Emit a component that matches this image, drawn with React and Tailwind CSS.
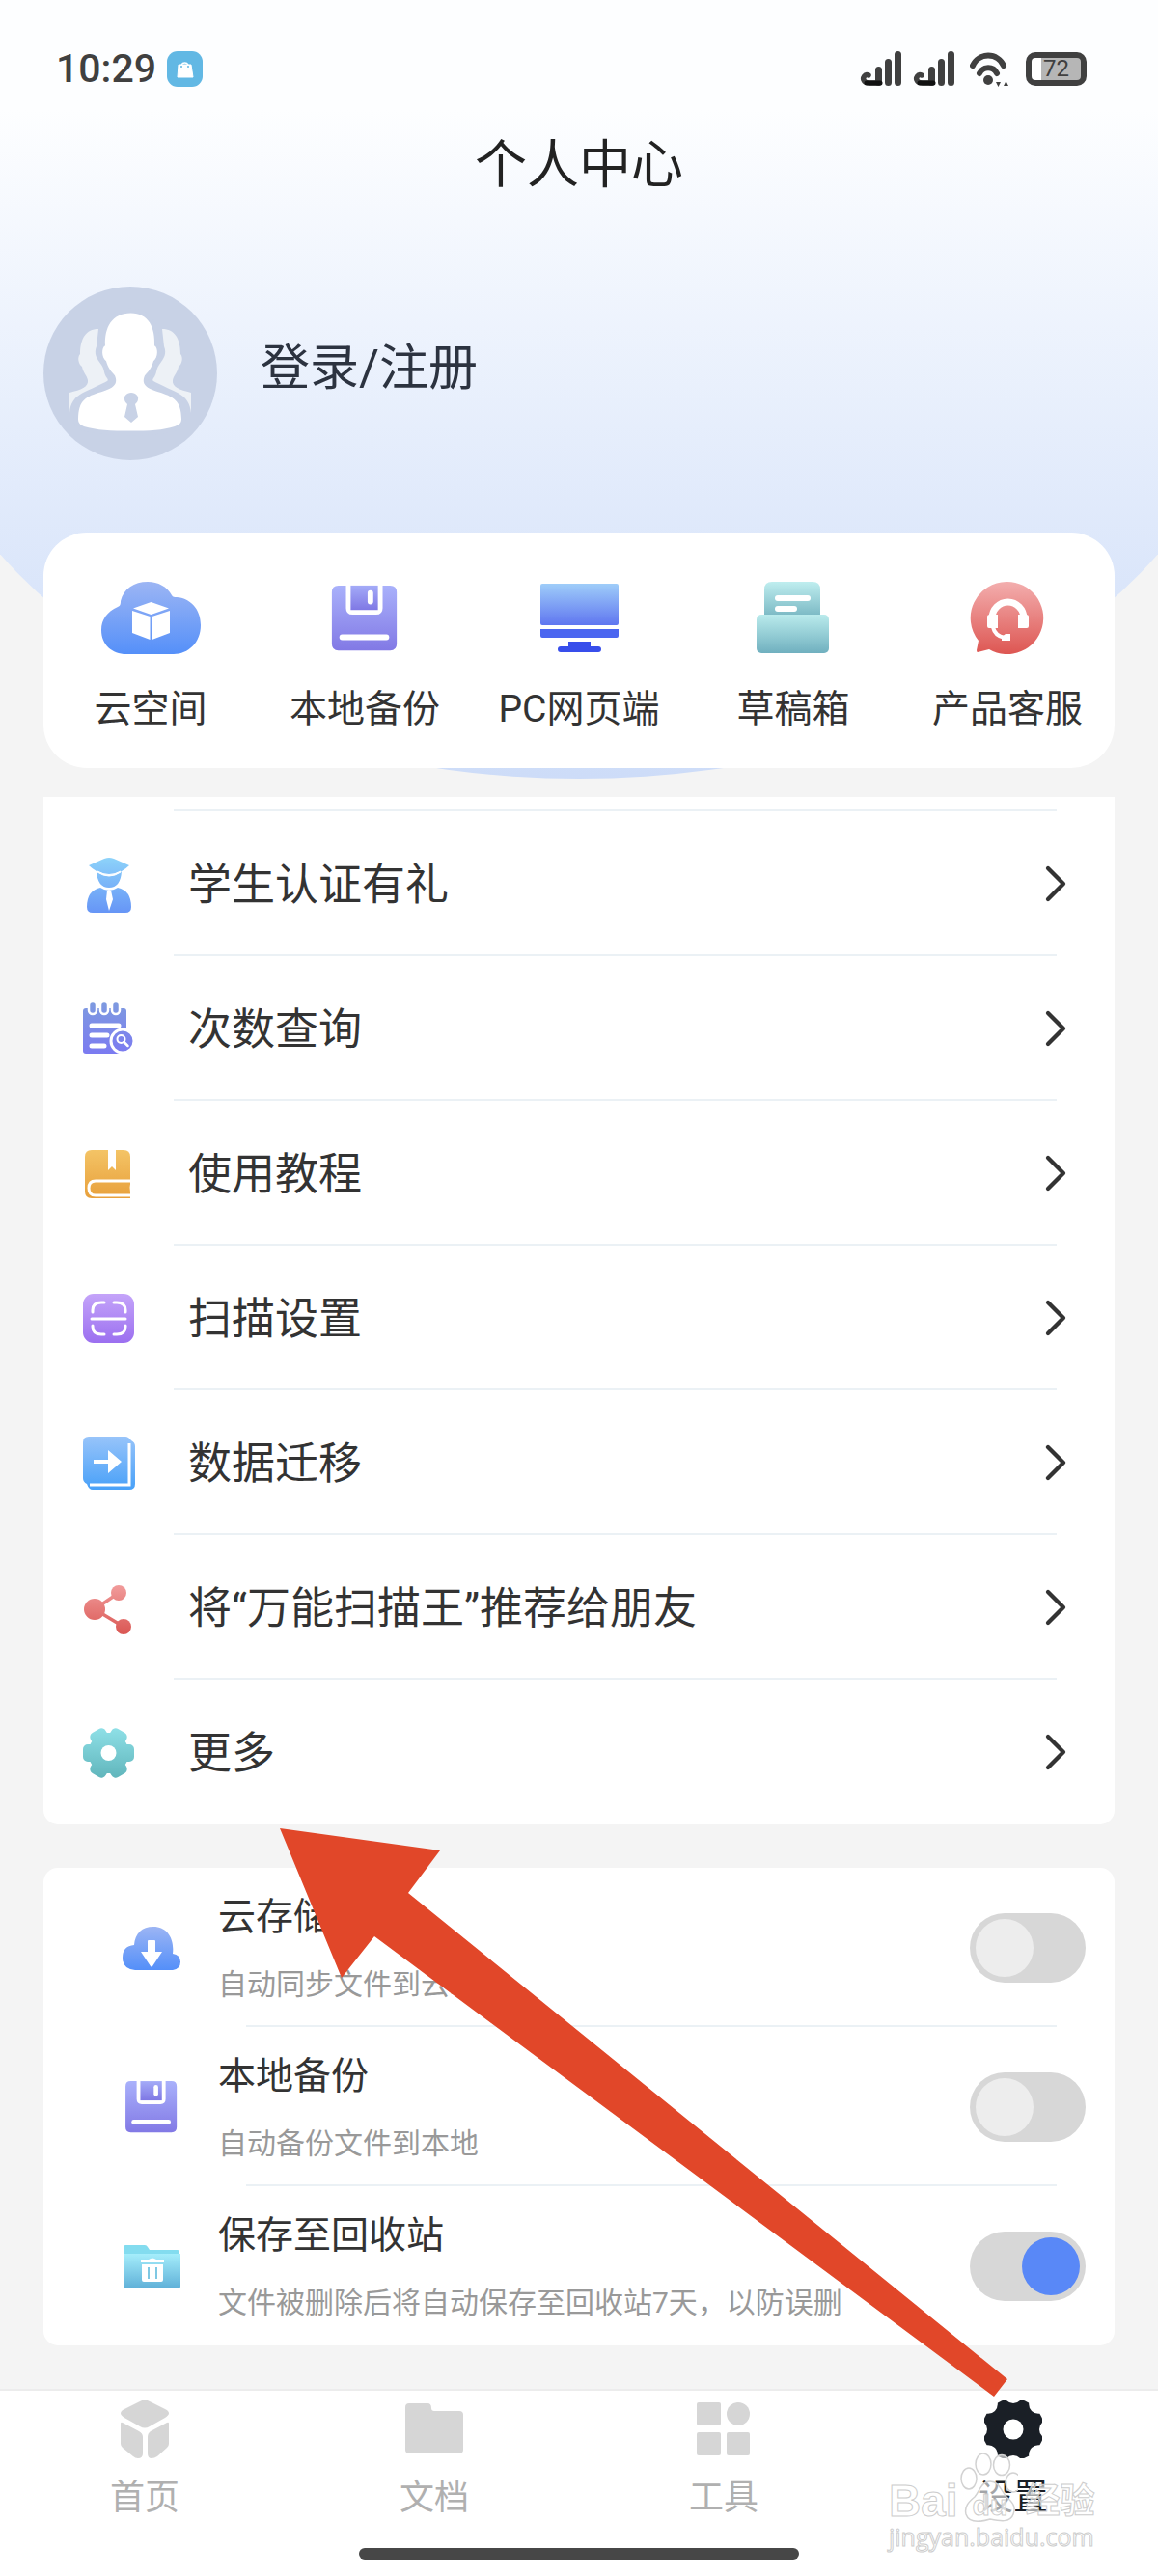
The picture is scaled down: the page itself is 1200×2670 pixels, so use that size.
import { ChevronRight } from 'lucide-react'

const shortcuts = [
    { label: '云空间', icon: <CloudBoxIcon /> },
    { label: '本地备份', icon: <FloppyIcon className="h-[76px] w-[76px]" /> },
    { label: 'PC网页端', icon: <MonitorIcon /> },
    { label: '草稿箱', icon: <DraftsIcon /> },
    { label: '产品客服', icon: <SupportIcon /> },
]

const menu = [
    { label: '学生认证有礼', icon: <StudentIcon /> },
    { label: '次数查询', icon: <NotepadIcon /> },
    { label: '使用教程', icon: <BookIcon /> },
    { label: '扫描设置', icon: <ScanIcon /> },
    { label: '数据迁移', icon: <MigrateIcon /> },
    { label: '将“万能扫描王”推荐给朋友', icon: <ShareIcon /> },
    { label: '更多', icon: <MoreIcon /> },
]

const settings = [
    { id: 'cloud', title: '云存储', desc: '自动同步文件到云端', icon: <CloudDownIcon />, on: false },
    { id: 'local', title: '本地备份', desc: '自动备份文件到本地', icon: <FloppyIcon className="h-[60px] w-[60px]" />, on: false },
    { id: 'recycle', title: '保存至回收站', desc: '文件被删除后将自动保存至回收站7天，以防误删', icon: <RecycleIcon />, on: true },
]

const tabs = [
    { label: '首页', icon: <HomeIcon /> },
    { label: '文档', icon: <FolderIcon /> },
    { label: '工具', icon: <ToolsIcon /> },
    { label: '设置', icon: <SettingsIcon />, active: true },
]

export default function App() {
    return (
        <div className="relative flex min-h-screen flex-col overflow-hidden bg-[#f4f4f4] font-[Roboto,'Noto_Sans_CJK_SC',sans-serif] text-[#333]">
            {/* Curved header background */}
            <div className="absolute -inset-x-[100px] top-0 h-[807px] bg-linear-to-b from-[#fdfeff] from-14% to-[#cddcf8] [border-radius:0_0_50%_50%/0_0_480px_480px]" />

            <StatusBar />

            <header className="relative px-[45px]">
                <h1 className="mt-12 text-center text-[54px] leading-[60px] text-[#222]">个人中心</h1>
                <a href="#login" className="mt-[95px] flex items-center gap-[45px]">
                    <Avatar />
                    <span className="pb-2.5 text-[51px] leading-[60px] text-[#2c3340]">登录/注册</span>
                </a>
            </header>

            <main className="relative flex-1 px-[45px] pb-[45px]">
                <nav className="mt-[75px] grid grid-cols-5 rounded-[45px] bg-white pt-[51px] pb-[34px]">
                    {shortcuts.map((item) => (
                        <a key={item.label} href="#shortcut" className="flex flex-col items-center gap-[29px]">
                            {item.icon}
                            <span className="text-[39px] leading-[54px] whitespace-nowrap">{item.label}</span>
                        </a>
                    ))}
                </nav>

                <ul className="mt-[30px] rounded-b-[15px] bg-white pt-[13px] pb-[2px]">
                    {menu.map((item) => (
                        <li key={item.label}>
                            <div className="mr-[60px] ml-[135px] h-[2px] bg-[#ebf1f5]" />
                            <button type="button" className="flex h-[148px] w-full items-center pt-[2px] pr-[29px] pl-[37px] text-left">
                                {item.icon}
                                <span className="ml-[53px] flex-1 pt-1 text-[45px] leading-[60px]">{item.label}</span>
                                <ChevronRight className="h-[64px] w-[64px]" strokeWidth={1.6} />
                            </button>
                        </li>
                    ))}
                </ul>

                <ul className="mt-[45px] rounded-[15px] bg-white pb-[2px]">
                    {settings.map((item, i) => (
                        <li key={item.id}>
                            {i > 0 && <div className="mr-[60px] ml-[210px] h-[2px] bg-[#ebf1f5]" />}
                            <label htmlFor={item.id} className="flex h-[163px] items-center pt-[2px] pr-[30px] pl-[82px]">
                                {item.icon}
                                <span className="ml-[39px] flex flex-1 flex-col gap-[22px] pt-1.5">
                                    <span className="text-[39px] leading-[48px]">{item.title}</span>
                                    <span className="text-[30px] leading-[48px] text-[#999]">{item.desc}</span>
                                </span>
                                <input
                                    id={item.id}
                                    type="checkbox"
                                    defaultChecked={item.on}
                                    className="h-[72px] w-[120px] appearance-none rounded-full bg-[#d7d7d7] p-[6px] before:block before:h-[60px] before:w-[60px] before:rounded-full before:bg-[#ededed] checked:before:translate-x-[48px] checked:before:bg-[#5988f7]"
                                />
                            </label>
                        </li>
                    ))}
                </ul>
            </main>

            <footer className="relative border-t-2 border-[#ececec] bg-white pb-[17px]">
                <nav className="grid grid-cols-4 pt-[10px]">
                    {tabs.map((tab) => (
                        <a
                            key={tab.label}
                            href="#tab"
                            className={`flex flex-col items-center gap-[17px] text-[36px] leading-[48px] ${tab.active ? 'text-[#1a1f26]' : 'text-[#b0b0b0]'}`}
                        >
                            {tab.icon}
                            {tab.label}
                        </a>
                    ))}
                </nav>
                <div className="mx-auto mt-[28px] h-[12px] w-[38%] rounded-full bg-[#474747]" />
            </footer>

            <PointerArrow />
            <Watermark />
        </div>
    )
}

function StatusBar() {
    return (
        <div className="relative flex h-[94px] items-center justify-between pt-12 pr-[74px] pl-[58px] text-[#404040]">
            <div className="flex items-center gap-[11px]">
                <span className="text-[41px] leading-[46px] font-medium">10:29</span>
                <svg className="h-[37px] w-[37px]" viewBox="0 0 37 37">
                    <rect width="37" height="37" rx="11" fill="#62b8e4" />
                    <path d="M12 14h13l2 13H11z" fill="#fff" stroke="#fff" strokeLinejoin="round" />
                    <path d="M15 14a4 4 0 0 1 7 0" fill="none" stroke="#fff" strokeWidth="1.5" />
                    <circle cx="15" cy="16" r="1" fill="#62b8e4" />
                    <circle cx="22" cy="16" r="1" fill="#62b8e4" />
                </svg>
            </div>
            <div className="flex items-center gap-[12px]">
                <SignalIcon />
                <SignalIcon />
                <svg className="ml-1 h-[40px] w-[42px]" viewBox="0 0 42 40">
                    <path d="M3 17a17.500 17.500 0 0 1 32 0" fill="none" stroke="currentColor" strokeWidth="6" strokeLinecap="round" />
                    <path d="M10 25a10 10 0 0 1 18 0" fill="none" stroke="currentColor" strokeWidth="6" strokeLinecap="round" />
                    <circle cx="19" cy="32" r="5" fill="currentColor" />
                    <path d="M27 34h5l-2.500 5zM35 38h5l-2.500-5z" fill="currentColor" />
                </svg>
                <div className="ml-1 flex h-[35px] w-[63px] items-center justify-center rounded-[10px] border-[6px] border-[#404040] bg-linear-to-r from-white from-20% to-[#b6b6b6] to-20%">
                    <span className="text-[24px] leading-[24px]">72</span>
                </div>
            </div>
        </div>
    )
}

function SignalIcon() {
    return (
        <svg className="h-[38px] w-[43px]" viewBox="0 0 43 38">
            <g fill="none" stroke="currentColor" strokeWidth="7" strokeLinecap="round">
                <path d="M39.500 4.500v29M29.500 12.500v21M19.500 20.500v13" />
                <path d="M9 26c-4-2-6 3-5 5 1 3 4 3 6 3h9" strokeWidth="5.500" />
            </g>
            <path d="M7 34h14" stroke="#111" strokeWidth="5" strokeLinecap="round" />
        </svg>
    )
}

function Avatar() {
    return (
        <svg className="h-[180px] w-[180px]" viewBox="0 0 180 180">
            <circle cx="90" cy="90" r="90" fill="#c8d2e6" />
            <path
                id="sideFigure"
                d="M57 44C44 44 38 54 38 70c-3 3-2 10 2 13 1 6 5 9 6 14 1 7-7 10-19 13v21c2-20 16-21 33-30 6-3 8-3 6-6-4-5-2-8-6-14-5-7-8-11-5-19z"
                fill="#edf1f6"
            />
            <use href="#sideFigure" transform="translate(180 0) scale(-1 1)" />
            <path
                d="M90.500 27C71 27 63 43 64 63c-4 2-4 13 1 17 2 8 5 11 9 16 4 10-2 14-14 18-16 5-24 9-24 30 0 4 2 7 6 8 13 4 28 5 48 5s34-1 46-5c5-1 7-4 7-8 0-21-9-25-24-30-12-4-18-8-14-18 4-5 7-8 9-16 5-4 5-15 1-17 1-20-6-36-24.500-36z"
                transform="translate(0 2) scale(1 .94)"
                fill="#fff"
                stroke="#c8d2e6"
                strokeWidth="10"
                paintOrder="stroke"
            />
            <path d="M91 110c5 0 8 4 7 7 0 2-2 4-3 5l3 13-7 6-7-6 3-13c-1-1-3-3-3-5-1-3 2-7 7-7z" fill="#c8d2e6" />
        </svg>
    )
}

function Gradient({ id, from, to, y1 = 0, y2 = 60 }) {
    return (
        <defs>
            <linearGradient id={id} gradientUnits="userSpaceOnUse" x1="0" x2="0" y1={y1} y2={y2}>
                <stop offset="0" stopColor={from} />
                <stop offset="1" stopColor={to} />
            </linearGradient>
        </defs>
    )
}

function CloudBoxIcon() {
    return (
        <svg className="h-[76px] w-[104px]" viewBox="0 0 104 76">
            <Gradient id="cloudBox" from="#9cb5f4" to="#548ff9" y2={76} />
            <path d="M27 75C12 75 1 65 1 50c0-11 6-19 17-24 3-1 3-4 3-6C24 7 35 0 49 0c11 0 20 5 25 14 1 2 3 2 5 2 14 1 25 12 25 29 0 18-13 30-28 30z" fill="url(#cloudBox)" />
            <path d="M52.500 21 71 27.500 52.500 34 34 27.500zM33 30l18.500 6v24L33 53zM72 30l-18.500 6v24L72 53z" fill="#fff" />
        </svg>
    )
}

function FloppyIcon({ className }) {
    return (
        <svg className={className} viewBox="14 -1 78 78">
            <Gradient id="floppy" from="#a9b1fb" to="#8279e5" y1={3} y2={72} />
            <Gradient id="floppyNotch" from="#a4abf8" to="#7f78e4" y1={3} y2={29} />
            <path d="M25 3h8v24q0 7 7 7h25q7 0 7-7V3h8q7 0 7 7v55q0 7-7 7H25q-7 0-7-7V10q0-7 7-7z" fill="url(#floppy)" />
            <path d="M38 3h29v26H38z" fill="url(#floppyNotch)" />
            <rect x="56" y="8" width="6" height="15" rx="3" fill="#fff" />
            <rect x="26" y="55" width="53" height="6" rx="3" fill="#fff" />
        </svg>
    )
}

function MonitorIcon() {
    return (
        <svg className="h-[76px] w-[104px]" viewBox="0 0 104 76">
            <Gradient id="screen" from="#9fcdf9" to="#5f76f0" y1={2} y2={45} />
            <rect x="12" y="2" width="81" height="43" rx="2" fill="url(#screen)" />
            <path d="M12 49h81v7q0 2-2 2H14q-2 0-2-2z" fill="#4b66f0" />
            <path d="M41 62h23v5h8q3 0 3 3t-3 3H33q-3 0-3-3t3-3h8z" fill="#384eeb" />
        </svg>
    )
}

function DraftsIcon() {
    return (
        <svg className="h-[76px] w-[104px]" viewBox="0 0 104 76">
            <Gradient id="paper" from="#bfeeef" to="#76b5c1" y2={38} />
            <Gradient id="tray" from="#baebec" to="#70b0bf" y1={34} y2={74} />
            <path d="M22 36V8q0-8 8-8h42q8 0 8 8v28z" fill="url(#paper)" />
            <rect x="33" y="14" width="37" height="6" rx="3" fill="#fff" />
            <rect x="33" y="25" width="23" height="6" rx="3" fill="#fff" />
            <rect x="14" y="34" width="75" height="40" rx="5" fill="url(#tray)" />
        </svg>
    )
}

function SupportIcon() {
    return (
        <svg className="h-[76px] w-[104px]" viewBox="0 0 104 76">
            <Gradient id="support" from="#f3aeae" to="#dd5551" y2={76} />
            <path d="M51.500 0A37.500 37.500 0 1 1 33 70l-12 3q-1 0-1-2l2-10A37.500 37.500 0 0 1 51.500 0z" fill="url(#support)" />
            <g fill="none" stroke="#fff">
                <path d="M36 38a16.500 17 0 0 1 33 0" strokeWidth="7" />
                <path d="M37 47q2 9 12 11" strokeWidth="4" />
            </g>
            <path d="M31 36q0-2 3-2h8v14h-9q-2 0-2-2zM63 34h8q3 0 3 2v10q0 2-2 2h-9zM46 57l4-3h5v7h-9z" fill="#fff" />
        </svg>
    )
}

function StudentIcon() {
    return (
        <svg className="h-[60px] w-[60px]" viewBox="0 0 60 60">
            <Gradient id="student" from="#8fd6fa" to="#6695f6" />
            <g fill="url(#student)">
                <path d="M31 3q2 0 5 1l16 7q-3 3-8 6-1 17-13 17T18 17q-5-3-8-6l16-7q3-1 5-1z" />
                <path d="M22 34q9 6 18 0 14 3 14 20 0 6-6 6H14q-6 0-6-6 0-17 14-20z" />
            </g>
            <path d="M19 17q12 7 24 0v1q-12 8-24 0z" fill="#fff" stroke="#fff" />
            <path d="M29 37h4l2 9-4 12-3-12z" fill="#fff" />
        </svg>
    )
}

function NotepadIcon() {
    return (
        <svg className="h-[60px] w-[60px]" viewBox="0 0 60 60">
            <Gradient id="notepad" from="#7e9cdf" to="#7b78f2" />
            <rect x="4" y="9" width="45" height="47" rx="3" fill="url(#notepad)" />
            {[14, 26, 38].map((x) => (
                <rect key={x} x={x - 4} y="2" width="8" height="13" rx="4" fill="url(#notepad)" stroke="#fff" strokeWidth="2.500" />
            ))}
            <path d="M13 27h28M13 37h16M13 48h13" stroke="#fff" strokeWidth="5" strokeLinecap="round" />
            <circle cx="45" cy="43" r="12" fill="url(#notepad)" stroke="#fff" strokeWidth="3" />
            <circle cx="43.500" cy="41" r="4" fill="none" stroke="#fff" strokeWidth="2" />
            <path d="m46.500 44 4 4" stroke="#fff" strokeWidth="2.500" strokeLinecap="round" />
        </svg>
    )
}

function BookIcon() {
    return (
        <svg className="h-[60px] w-[60px]" viewBox="0 0 60 60">
            <Gradient id="book" from="#f5c86b" to="#e79d38" />
            <path d="M13 6h33q7 0 7 7v43H13q-7 0-7-7V13q0-7 7-7z" fill="url(#book)" />
            <path d="M30 5h8v22l-4-4-4 4z" fill="#fff" />
            <path d="M54 38H17q-7 0-7 7.500T17 53h37" fill="none" stroke="#fff" strokeWidth="3" />
            <path d="M54 39q-3 6 0 13z" fill="#fff" />
        </svg>
    )
}

function ScanIcon() {
    return (
        <svg className="h-[60px] w-[60px]" viewBox="0 0 60 60">
            <Gradient id="scan" from="#c8a9fa" to="#986bef" />
            <rect x="4" y="5" width="53" height="51" rx="11" fill="url(#scan)" />
            <path
                d="M13 31h35M14 24v-2q0-8 9-8h3M36 14h3q9 0 9 8v2M14 38v1q0 8 9 8h3M36 47h3q9 0 9-8v-1"
                fill="none"
                stroke="#fff"
                strokeWidth="3"
                strokeLinecap="round"
            />
        </svg>
    )
}

function MigrateIcon() {
    return (
        <svg className="h-[60px] w-[60px]" viewBox="0 0 60 60">
            <Gradient id="migrate" from="#9cc6fa" to="#459ff8" />
            <path d="M10 3h38q3 0 6 4 4 2 4 6v39q0 6-6 6H14q-4 0-6-6-4-2-4-6V9q0-6 6-6z" fill="url(#migrate)" />
            <path d="M52 10v43H11" fill="none" stroke="#fff" strokeWidth="3" />
            <path d="M15 27h15V17l14 12-14 12V31H15z" fill="#fff" />
        </svg>
    )
}

function ShareIcon() {
    return (
        <svg className="h-[60px] w-[60px]" viewBox="0 0 60 60">
            <Gradient id="share" from="#f4a5a5" to="#d95450" />
            <path d="m41 15-25 17 30 18" fill="none" stroke="url(#share)" strokeWidth="3.500" />
            <g fill="url(#share)">
                <circle cx="16" cy="32" r="11" />
                <circle cx="41" cy="15" r="8" />
                <circle cx="46" cy="50" r="8" />
            </g>
        </svg>
    )
}

function MoreIcon() {
    return (
        <svg className="h-[60px] w-[60px]" viewBox="0 0 60 60">
            <Gradient id="more" from="#93e4eb" to="#5eb3b9" />
            <clipPath id="moreShape">
                <circle cx="30.500" cy="31" r="21" />
                <rect x="4" y="22" width="53" height="18" rx="5" />
                <rect x="4" y="22" width="53" height="18" rx="5" transform="rotate(60 30.500 31)" />
                <rect x="4" y="22" width="53" height="18" rx="5" transform="rotate(120 30.500 31)" />
            </clipPath>
            <rect width="60" height="60" fill="url(#more)" clipPath="url(#moreShape)" />
            <circle cx="30.500" cy="31" r="8" fill="#fff" />
        </svg>
    )
}

function CloudDownIcon() {
    return (
        <svg className="h-[60px] w-[60px]" viewBox="0 0 60 60">
            <Gradient id="cloudDown" from="#9cb5f4" to="#548ff9" y1={8} y2={53} />
            <path d="M13 53Q0 52 0 40t12-13C13 15 20 8 32 8c14 0 22 12 20 28q8 1 8 8.500T52 53z" fill="url(#cloudDown)" />
            <path d="M26 23q0-1 1-1h6q1 0 1 1v11h7L31 49q-1 1-2 0L19 34h7z" fill="#fff" />
        </svg>
    )
}

function RecycleIcon() {
    return (
        <svg className="h-[60px] w-[60px]" viewBox="0 0 60 60">
            <Gradient id="recycle" from="#a9f1fd" to="#5fb0d8" y1={15} y2={53} />
            <path d="M1 22V10q0-2 2-2h20q2 0 3 2l2 3h29q2 0 2 2v7z" fill="#83dcef" />
            <path d="M1 17h59v34q0 2-2 2H3q-2 0-2-2z" fill="url(#recycle)" />
            <path d="M19 23h8q4-3 8 0h8v3H19zM20 28h22v16q0 2-2 2H22q-2 0-2-2z" fill="#fff" />
            <path d="M27 31v12M35 31v12" stroke="#7fc8e3" strokeWidth="2" />
        </svg>
    )
}

function HomeIcon() {
    return (
        <svg className="h-[60px] w-[60px]" viewBox="0 0 60 60" fill="#d6d6d6">
            <path d="M25 1q5-3 10 0l16 8q8 4 0 9l-16 9q-5 3-10 0L9 18q-8-5 0-9z" />
            <path d="M5 24q0-2 2-1l17 9q4 2 4 6v17q0 5-5 5-3 0-5-2L7 49q-2-2-2-4zM55 24q0-2-2-1l-17 9q-3 2-3 6v17q0 5 4 5 3 0 6-2l10-9q2-2 2-4z" />
        </svg>
    )
}

function FolderIcon() {
    return (
        <svg className="h-[60px] w-[60px]" viewBox="0 0 60 60" fill="#d6d6d6">
            <path d="M4 3h19q4 0 4 5 0 3 3 3h26q4 0 4 4v36q0 4-4 4H4q-4 0-4-4V7q0-4 4-4z" />
        </svg>
    )
}

function ToolsIcon() {
    return (
        <svg className="h-[60px] w-[60px]" viewBox="0 0 60 60" fill="#d6d6d6">
            <rect x="2" y="2" width="25" height="24" rx="2" />
            <circle cx="45" cy="14" r="12" />
            <rect x="2" y="33" width="25" height="24" rx="2" />
            <rect x="33" y="33" width="24" height="24" rx="2" />
        </svg>
    )
}

function SettingsIcon() {
    return (
        <svg className="h-[60px] w-[60px]" viewBox="0 0 60 60">
            <mask id="gearMask">
                <circle cx="30" cy="30" r="32" fill="#fff" />
                <circle cx="30" cy="30" r="10.500" fill="#000" />
                {[0, 45, 90, 135, 180, 225, 270, 315].map((deg) => (
                    <circle key={deg} cx="67" cy="30" r="10" fill="#000" transform={`rotate(${deg} 30 30)`} />
                ))}
            </mask>
            <rect width="60" height="60" rx="6" fill="#1a1f26" mask="url(#gearMask)" />
        </svg>
    )
}

// Red pointer from the settings tab up to the last menu row
function PointerArrow() {
    return (
        <svg className="pointer-events-none absolute top-[1895px] left-[290px] h-[590px] w-[755px]" viewBox="0 0 755 590">
            <path d="M0 0 166 23 133 67 754 571 740 589 98 112 64 155z" fill="#e14729" />
        </svg>
    )
}

function Watermark() {
    return (
        <div className="pointer-events-none absolute right-[63px] bottom-[27px] w-[216px] text-white/60 [-webkit-text-stroke:1px_#cdcdcd]">
            <div className="flex items-end">
                <span className="font-['Liberation_Sans'] text-[46px] leading-[46px] font-bold">Bai</span>
                <span className="relative">
                    <svg className="h-[74px] w-[62px]" viewBox="0 0 62 74" fill="#fff" fillOpacity=".6" stroke="#d2d2d2" strokeWidth="1.500">
                        <ellipse cx="11" cy="28" rx="8" ry="11" />
                        <ellipse cx="26" cy="13" rx="8" ry="11" />
                        <ellipse cx="45" cy="14" rx="8.500" ry="10.500" />
                        <ellipse cx="57" cy="32" rx="8" ry="10" />
                        <path d="M33 31c9 0 11 9 17 16 7 6 10 11 7 18-3 9-14 7-24 5-10 3-22 4-25-5-2-8 3-13 9-18 5-6 7-16 16-16z" />
                    </svg>
                    <span className="absolute bottom-[3px] left-[15px] font-['Liberation_Sans'] text-[30px] leading-[30px] font-bold">du</span>
                </span>
                <span className="ml-2 text-[36px] leading-[44px] font-bold">经验</span>
            </div>
            <div className="font-['Open_Sans'] text-[25px] leading-[28px]">jingyan.baidu.com</div>
        </div>
    )
}
